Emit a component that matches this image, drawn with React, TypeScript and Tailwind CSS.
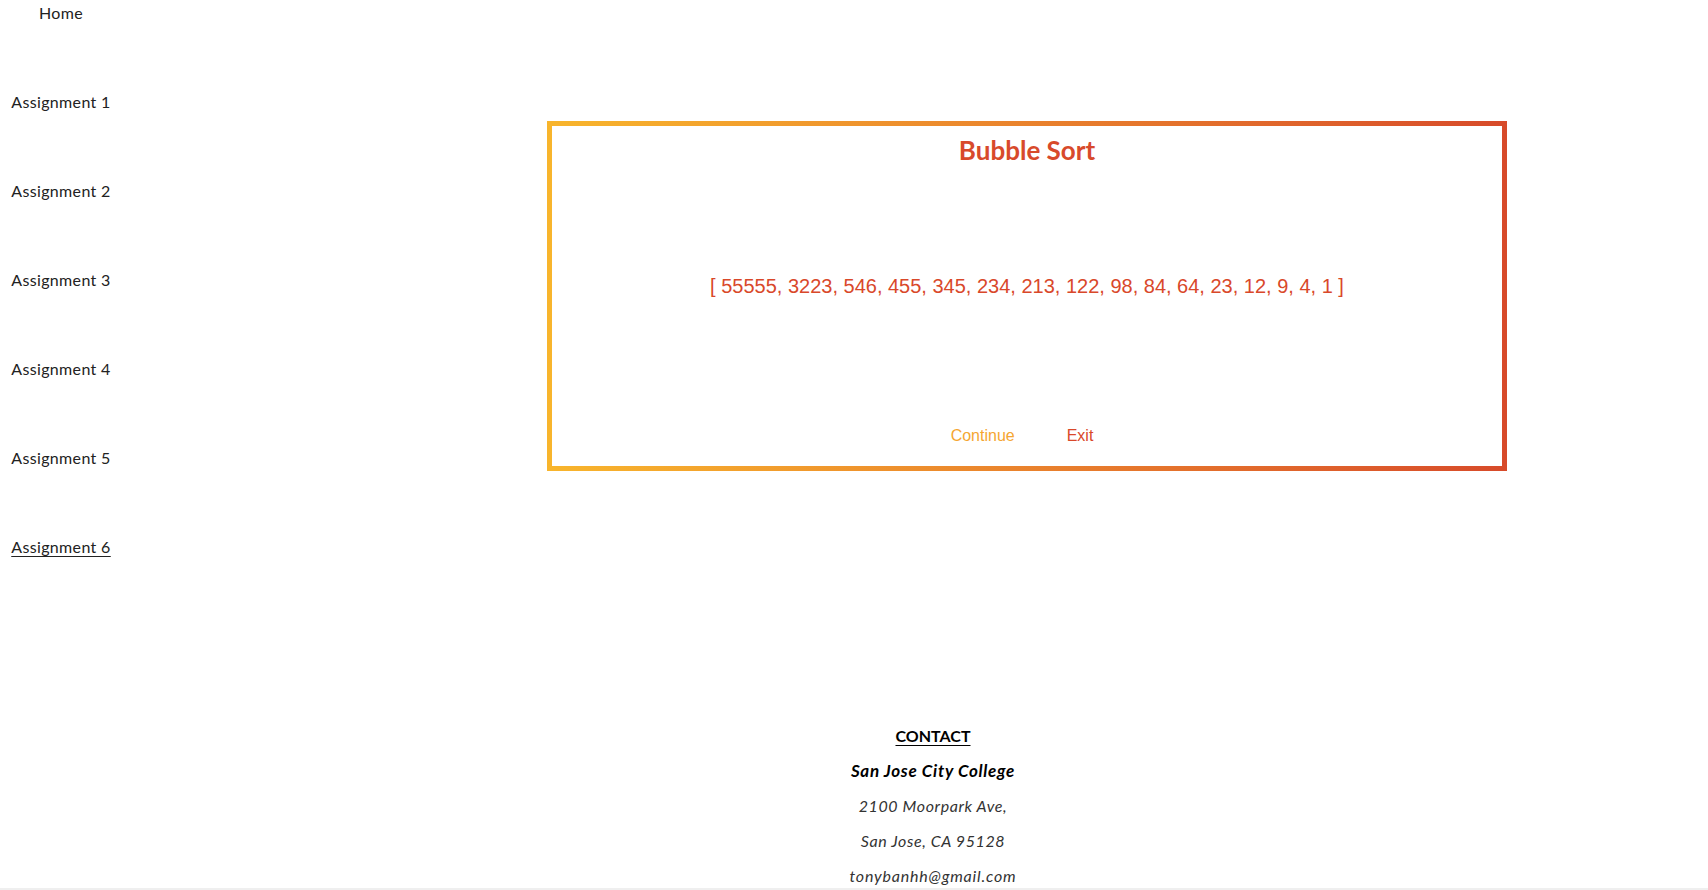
import React from "react";

const navItems = ["Assignment 1", "Assignment 2", "Assignment 3", "Assignment 4", "Assignment 5", "Assignment 6"];

export default function App() {
  return (
    <div className="relative h-screen w-full overflow-hidden bg-white font-['Lato',_'Open_Sans',_sans-serif] text-[#222]">
      <div className="flex">
        <nav className="flex w-[122px] flex-col items-center gap-[65px] pt-[1px] tracking-[0.35px]">
          <a className="text-[16px] leading-[24px]">Home</a>
          {navItems.map((n, i) => (
            <a
              key={n}
              className={
                i === 5
                  ? "text-[16px] leading-[24px] underline underline-offset-[3px]"
                  : "text-[16px] leading-[24px]"
              }
            >
              {n}
            </a>
          ))}
        </nav>
        <main className="ml-[425px] pt-[121px]">
          <div className="h-[350px] w-[960px] bg-gradient-to-r from-[#f8b52c] to-[#d74a2a] p-[5px]">
            <div className="flex h-full w-full flex-col items-center bg-white pt-[9px]">
              <h1 className="text-[26px] font-bold leading-[30px] text-[#d84a2b]">Bubble Sort</h1>
              <p className="mt-[109px] font-['Liberation_Sans',_Arial,_sans-serif] text-[20px] leading-[24px] text-[#d9482a]">
                [ 55555, 3223, 546, 455, 345, 234, 213, 122, 98, 84, 64, 23, 12, 9, 4, 1 ]
              </p>
              <div className="mt-[128px] flex gap-[52px] pr-[10px] font-['Liberation_Sans',_Arial,_sans-serif] text-[16px] leading-[20px]">
                <button className="text-[#f5a632]">Continue</button>
                <button className="text-[#d9482a]">Exit</button>
              </div>
            </div>
          </div>
        </main>
      </div>
      <footer className="mt-[159px] flex flex-col items-center pl-[158px] text-[16px] leading-[35px] text-black">
        <p className="font-bold underline underline-offset-[3px]">CONTACT</p>
        <p className="text-[17px] font-bold italic tracking-[0.7px]">San Jose City College</p>
        <p className="italic tracking-[0.6px] text-[#333]">2100 Moorpark Ave,</p>
        <p className="italic tracking-[0.6px] text-[#333]">San Jose, CA 95128</p>
        <p className="italic tracking-[0.8px] text-[#333]">tonybanhh@gmail.com</p>
      </footer>
      <div className="absolute bottom-0 left-0 h-[2px] w-full bg-[#efefef]" />
    </div>
  );
}
